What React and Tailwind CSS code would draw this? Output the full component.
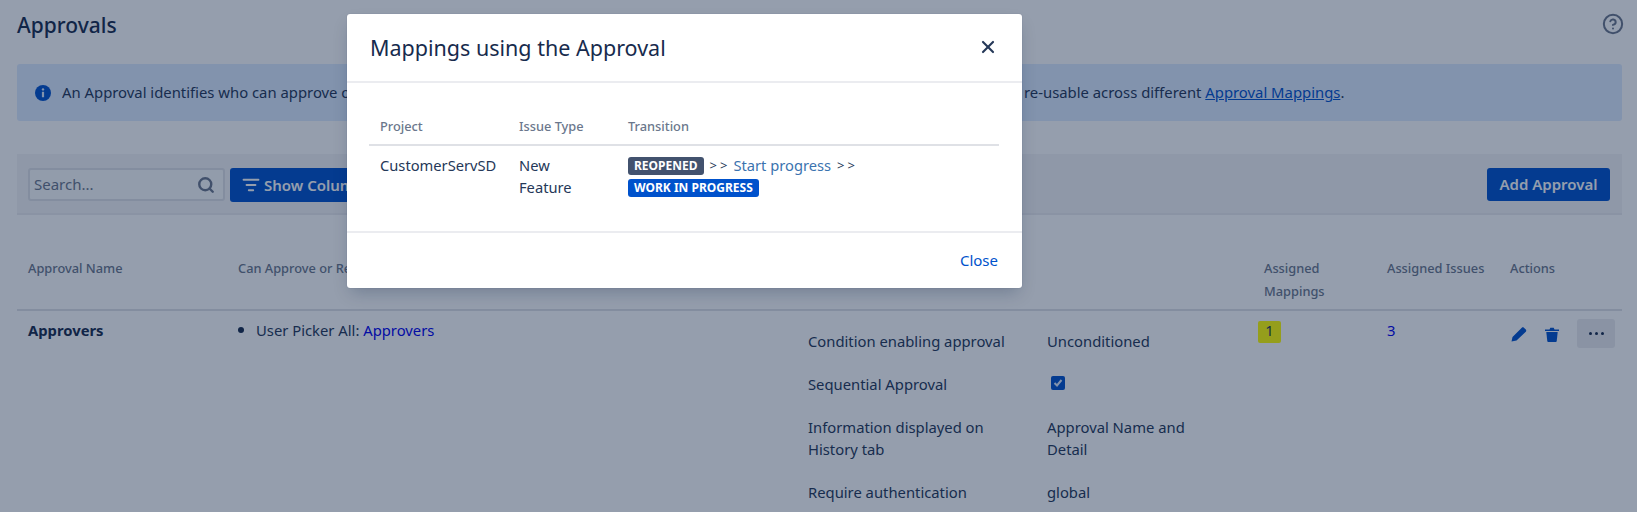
import React from "react";
import { X, Search, ListFilter, CircleHelp } from "lucide-react";

function Pencil() {
  return (
    <svg width="16" height="16" viewBox="0 0 16 16" fill="#0052cc">
      <path d="M0.5 15.5 L1.5 11 L10.8 1.7 C11.4 1.1 12.3 1.1 12.9 1.7 L14.8 3.6 C15.4 4.2 15.4 5.1 14.8 5.7 L5.5 14.5 Z" />
    </svg>
  );
}

function Trash() {
  return (
    <svg width="14" height="15" viewBox="0 0 14 15" fill="#0052cc">
      <path d="M0 2.5 H4.5 L5.3 0.8 H8.7 L9.5 2.5 H14 V4 H0 Z" />
      <path d="M1.3 5 H12.7 L11.7 14.2 C11.6 14.7 11.3 15 10.8 15 H3.2 C2.7 15 2.4 14.7 2.3 14.2 Z" />
    </svg>
  );
}

function Info() {
  return (
    <svg width="16" height="16" viewBox="0 0 16 16">
      <circle cx="8" cy="8" r="8" fill="#0052cc" />
      <circle cx="8" cy="4.4" r="1.2" fill="#deebff" />
      <rect x="6.9" y="6.7" width="2.2" height="5.6" rx="0.4" fill="#deebff" />
    </svg>
  );
}

function DetailRow({ label, children, className }) {
  return (
    <div className={`grid grid-cols-[239px_170px] text-[14.8px] leading-[22px] ${className}`}>
      <div>{label}</div>
      <div>{children}</div>
    </div>
  );
}

export default function App() {
  return (
    <div
      className="relative w-[1637px] h-[512px] overflow-hidden bg-white text-[#253858] text-[14.5px]"
      style={{ fontFamily: '"Noto Sans", sans-serif' }}
    >
      <div className="px-[17px] pt-[12px] pr-[15px]">
        <div className="flex items-start justify-between h-[52px]">
          <h1 className="text-[21px] leading-[26px] font-medium text-[#172b4d]">Approvals</h1>
          <CircleHelp size={22} strokeWidth={2.2} className="text-[#6b778c] mt-[1px] -mr-[2px]" />
        </div>

        <div className="flex items-center h-[57px] bg-[#deebff] rounded-[3px] pl-[18px] text-[14.85px]">
          <Info />
          <span className="ml-[11px] w-[962px] overflow-hidden whitespace-nowrap">
            An Approval identifies who can approve or reject an issue and how the approval should work. Approvals are
          </span>
          <span>
            re-usable across different <span className="text-[#0052cc] underline">Approval Mappings</span>.
          </span>
        </div>

        <div className="mt-[33px] h-[61px] bg-[#f4f5f7] border-b-2 border-[#ebecf0] flex items-start pl-[11px] pr-[12px] pt-[14px]">
          <div className="w-[197px] h-[33px] bg-[#fafbfc] border-2 border-[#dfe1e6] rounded-[3px] flex items-center justify-between pl-[4px] pr-[8px]">
            <span className="text-[#6b778c] text-[15px]">Search...</span>
            <Search size={18} strokeWidth={3.2} className="text-[#6b778c]" />
          </div>
          <button className="ml-[5px] h-[34px] w-[200px] bg-[#0052cc] rounded-[3px] text-white font-semibold flex items-center pl-[12px] gap-[4px] text-[15px]">
            <ListFilter size={18} strokeWidth={2.4} />
            Show Columns
          </button>
          <button className="ml-auto h-[33px] w-[123px] bg-[#0052cc] rounded-[3px] text-white font-semibold text-[15px]">
            Add Approval
          </button>
        </div>

        <div className="grid grid-cols-[211px_570px_455px_123px_123px_123px] mt-[27px] border-b-2 border-[#dfe1e6] h-[69px] text-[12.8px] leading-[23px] font-medium text-[#6b778c] pt-[15px]">
          <div className="pl-[11px]">Approval Name</div>
          <div className="pl-[10px]">Can Approve or Reject</div>
          <div className="pl-[11px]">Configuration</div>
          <div className="pl-[11px]">
            Assigned
            <br />
            Mappings
          </div>
          <div className="pl-[11px] whitespace-nowrap">Assigned Issues</div>
          <div className="pl-[11px]">Actions</div>
        </div>

        <div className="grid grid-cols-[211px_570px_455px_123px_123px_123px] text-[14.8px] leading-[22px]">
          <div className="pl-[11px] pt-[8px] font-bold text-[#172b4d]">Approvers</div>
          <div className="pl-[10px] pt-[8px] flex">
            <span className="w-[6px] h-[6px] rounded-full bg-[#172b4d] mt-[8px] mr-[12px]" />
            <span>
              User Picker All: <span className="text-[#0000ee]">Approvers</span>
            </span>
          </div>
          <div className="pl-[10px] pt-[19px]">
            <DetailRow label="Condition enabling approval">Unconditioned</DetailRow>
            <DetailRow label="Sequential Approval" className="mt-[21px]">
              <span className="ml-[4px] mt-[3px] w-[14px] h-[14px] bg-[#0052cc] rounded-[2px] flex items-center justify-center">
                <svg width="10" height="10" viewBox="0 0 10 10" fill="none" stroke="#deebff" strokeWidth="2">
                  <path d="M1.5 5 L4 7.5 L8.5 2" />
                </svg>
              </span>
            </DetailRow>
            <DetailRow label={<>Information displayed on<br />History tab</>} className="mt-[21px]">
              Approval Name and Detail
            </DetailRow>
            <DetailRow label="Require authentication" className="mt-[21px]">global</DetailRow>
          </div>
          <div className="pl-[5px] pt-[10px]">
            <div className="w-[23px] h-[22px] bg-[#ffff00] rounded-[2px] text-center leading-[18px]">1</div>
          </div>
          <div className="pl-[11px] pt-[8px] text-[#0000ee]">3</div>
          <div className="pl-[12px] pt-[8px] flex items-start">
            <span className="mt-[7px]"><Pencil /></span>
            <span className="mt-[8px] ml-[18px]"><Trash /></span>
            <span className="ml-[18px] w-[38px] h-[29px] bg-[#ebecf0] rounded-[3px] flex items-center justify-center gap-[3px]">
              <i className="w-[3px] h-[3px] rounded-full bg-[#172b4d]" />
              <i className="w-[3px] h-[3px] rounded-full bg-[#172b4d]" />
              <i className="w-[3px] h-[3px] rounded-full bg-[#172b4d]" />
            </span>
          </div>
        </div>
      </div>

      <div className="absolute inset-0 bg-[rgba(9,30,66,0.43)]" />

      <div className="absolute left-[347px] top-[14px] w-[675px] h-[274px] bg-white rounded-[3px] shadow-[0_8px_16px_-4px_rgba(9,30,66,0.25),0_0_1px_rgba(9,30,66,0.31)] flex flex-col">
        <div className="h-[69px] border-b-2 border-[#ebecf0] flex items-center justify-between pl-[23px] pr-[24px] shrink-0">
          <h2 className="text-[21.5px] font-normal leading-[28px] text-[#172b4d]">Mappings using the Approval</h2>
          <X size={20} strokeWidth={2.6} className="text-[#253858] mb-[2px]" />
        </div>
        <div className="flex-1 pl-[22px] pr-[23px]">
          <div className="grid grid-cols-[139px_109px_1fr] border-b-2 border-[#dfe1e6] h-[63px] text-[12.8px] font-medium text-[#6b778c] pt-[32px] leading-[22px]">
            <div className="pl-[11px]">Project</div>
            <div className="pl-[11px]">Issue Type</div>
            <div className="pl-[11px]">Transition</div>
          </div>
          <div className="grid grid-cols-[139px_109px_1fr] pt-[8px] text-[14.7px] leading-[22px]">
            <div className="pl-[11px]">CustomerServSD</div>
            <div className="pl-[11px]">New<br />Feature</div>
            <div className="pl-[11px]">
              <div className="flex items-center h-[22px] mt-[1px]">
                <span className="bg-[#42526e] text-white text-[12px] font-bold rounded-[3px] px-[6px] h-[18px] leading-[18px]">REOPENED</span>
                <span className="ml-[6px] mb-[2px] text-[13px] tracking-[3px]">&gt;&gt;</span>
                <span className="ml-[3px] mb-[2px] text-[#3b73af]">Start progress</span>
                <span className="ml-[6px] mb-[2px] text-[13px] tracking-[3px]">&gt;&gt;</span>
              </div>
              <div className="flex items-center h-[22px]">
                <span className="bg-[#0052cc] text-white text-[12px] font-bold rounded-[3px] px-[6px] h-[18px] leading-[18px]">WORK IN PROGRESS</span>
              </div>
            </div>
          </div>
        </div>
        <div className="h-[57px] border-t-2 border-[#ebecf0] flex items-center justify-end pr-[24px] text-[#0052cc] text-[15px] shrink-0">
          Close
        </div>
      </div>
    </div>
  );
}
